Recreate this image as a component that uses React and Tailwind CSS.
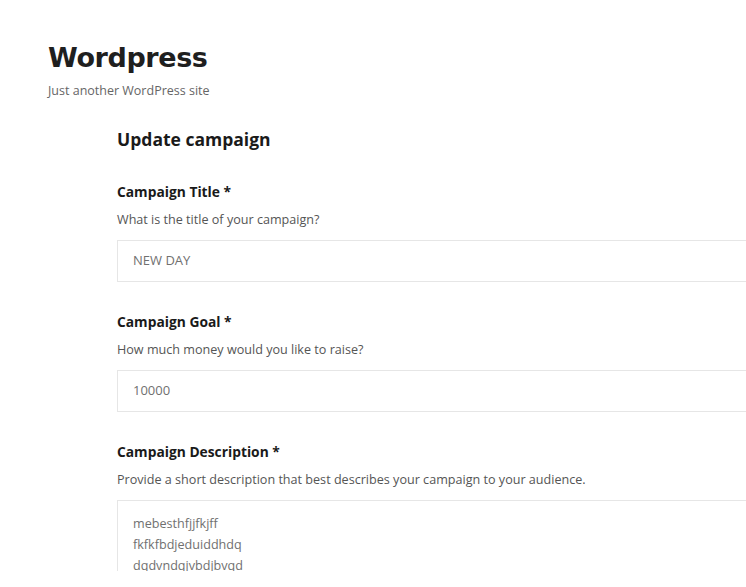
export default function App() {
    return (
        <div className="min-h-[587px] bg-white font-['Open_Sans',sans-serif] overflow-hidden">
            <header className="pl-12 pt-[40px]">
                <h1 className="font-['DejaVu_Sans',sans-serif] font-bold text-[27px] leading-[36px] text-[#1f1f1f] tracking-[-0.4px]">Wordpress</h1>
                <p className="mt-[7px] text-[12.5px] leading-[16px] text-[#666]">Just another WordPress site</p>
            </header>

            <main className="pl-[117px] pt-[27px]">
                <h2 className="text-[17.5px] leading-[26px] font-bold text-[#1a1a1a]">Update campaign</h2>

                <Field
                    label="Campaign Title *"
                    help="What is the title of your campaign?"
                    value="NEW DAY"
                    className="mt-[30px]"
                />
                <Field
                    label="Campaign Goal *"
                    help="How much money would you like to raise?"
                    value="10000"
                    className="mt-[30px]"
                />

                <div className="mt-[30px]">
                    <div className="text-[13.8px] leading-[20px] font-bold text-[#1a1a1a]">Campaign Description *</div>
                    <div className="mt-[9px] text-[12.6px] leading-[18px] text-[#555]">Provide a short description that best describes your campaign to your audience.</div>
                    <div className="mt-[11px] h-[71px] overflow-hidden border-t border-l border-[#e6e6e6] pl-[15px] pt-[12px] text-[12.6px] leading-[21px] text-[#707070]">
                        <div>mebesthfjjfkjff</div>
                        <div>fkfkfbdjeduiddhdq</div>
                        <div>dqdvndqjvbdjbvqd</div>
                    </div>
                </div>
            </main>
        </div>
    )
}

function Field(props) {
    return (
        <div className={props.className}>
            <div className="text-[13.8px] leading-[20px] font-bold text-[#1a1a1a]">{props.label}</div>
            <div className="mt-[9px] text-[12.6px] leading-[18px] text-[#555]">{props.help}</div>
            <div className="mt-[11px] h-[42px] border border-r-0 border-[#e6e6e6] pl-[15px] flex items-center text-[13px] text-[#707070]">
                {props.value}
            </div>
        </div>
    )
}
